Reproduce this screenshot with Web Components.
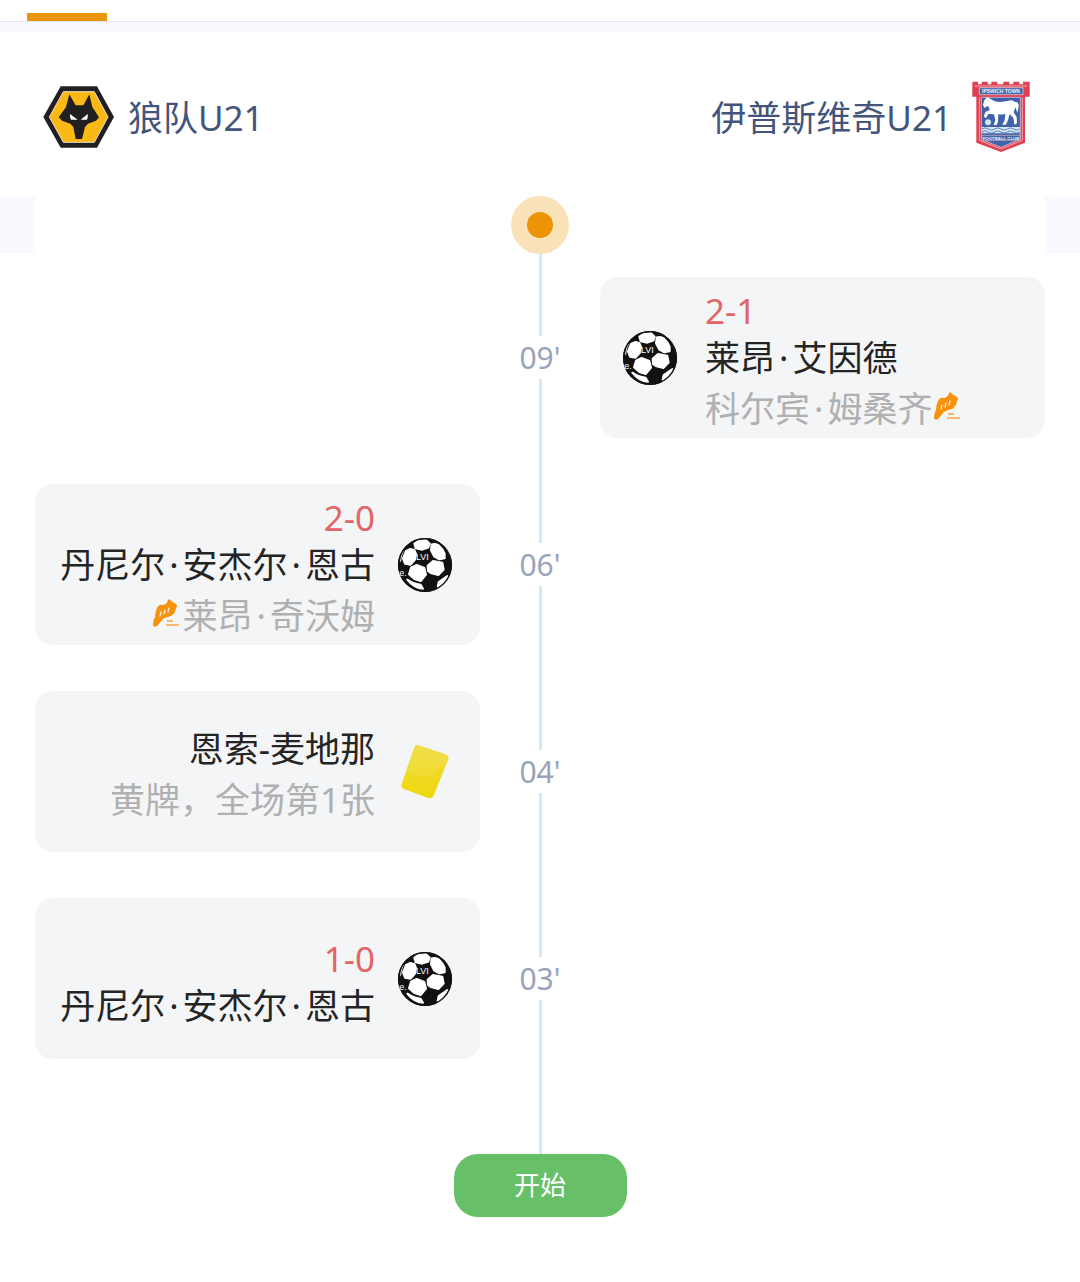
<!DOCTYPE html>
<html lang="zh-CN">
<head>
<meta charset="utf-8">
<meta name="viewport" content="width=device-width, initial-scale=1">
<title>狼队U21 - 伊普斯维奇U21</title>
<style>
body { margin: 0; background: #fff; font-family: "Noto Sans", "Noto Sans CJK SC", sans-serif; }
</style>
</head>
<body>
<match-page></match-page>

<template id="art-wolves">
  <svg viewBox="40 21 216 216" aria-hidden="true">
    <path d="M93 34H202L253 126L202 218H93L41 126Z" fill="#221f20"/>
    <path d="M101 50H194L235 126L194 202H101L59 126Z" fill="#fdb913" stroke="#e8dfcf" stroke-width="3"/>
    <path d="M119 58L138 91H161L179 58L188 96L208 127L199 137L175 146L166 156L157 192H138L131 156L122 146L97 137L87 127L109 96Z" fill="#221f20"/>
    <path d="M121 117L144 134H124Q120 127 121 117ZM174 117L153 134H172Q176 127 174 117Z" fill="#fff"/>
  </svg>
</template>

<template id="art-ipswich">
  <svg viewBox="45 36 216 216" aria-hidden="true">
    <path d="M67 35H84V43H95V35H113V43H124V35H142V43H160V35H178V43H190V35H208V43H219V35H239V80H225V218L153 246L79 218V80H67Z" fill="#df3f50"/>
    <path d="M74 48H232M88 82V211L153 237L217 211V82" fill="none" stroke="#f3a5ac" stroke-width="3"/>
    <path d="M88 53H219V74H88Z" fill="#4668aa" stroke="#f5dce2" stroke-width="2"/>
    <path d="M94 82H211V208L153 232L94 208Z" fill="#3f62aa" stroke="#e9dbe8" stroke-width="2"/>
    <path d="M103 91L111 81L122 87Q136 98 151 96L172 93Q187 88 195 96Q207 94 206 111L202 128L196 112L191 127L200 141L201 160L193 164L190 143L179 132L174 150L168 164H157L164 151L166 131Q154 136 145 132L144 155L140 165H131L136 150L132 133L115 132L108 145L101 139L107 125L119 121L115 108L103 113L99 104Z" fill="#fff"/>
    <circle cx="114" cy="157" r="9" fill="#d5e4f5"/>
    <path d="M95 171H210V190H95Z" fill="#d9e7f5"/>
    <path d="M96 177Q105 170 115 177T134 177T153 177T172 177T191 177T209 177M96 186Q105 179 115 186T134 186T153 186T172 186T191 186T209 186" fill="none" stroke="#5680bd" stroke-width="3"/>
    <path d="M96 196H210V211H96Z" fill="#4164a6" stroke="#dfb8cc" stroke-width="2"/>
    <g fill="#edf2fb" font-family="Liberation Sans, sans-serif" font-weight="700" text-anchor="middle">
      <text x="153" y="69" font-size="15">IPSWICH TOWN</text>
      <text x="153" y="209" font-size="13">FOOTBALL CLUB</text>
    </g>
  </svg>
</template>

<template id="art-goal">
  <svg viewBox="9 9 162 162" role="img" aria-label="进球">
    <circle cx="90" cy="90" r="81" fill="#111"/>
    <g fill="#fff" stroke="#fff" stroke-width="6" stroke-linejoin="round">
      <path d="M58 26L72 17L94 16L104 26L100 38L82 44L62 40Z"/>
      <path d="M33 48L46 42L58 45L63 57L60 74L47 89L30 86L24 70Z"/>
      <path d="M110 28Q120 25 131 31Q143 42 149 56L149 70L133 73L118 65L108 46Z"/>
      <path d="M48 98L65 90L88 99L93 119L77 138L58 132L42 118Z"/>
      <path d="M98 92L114 78L142 83L146 104L130 120L107 114L99 108Z"/>
      <path d="M37 134Q54 146 77 149L84 161Q57 160 37 134Z"/>
      <path d="M131 141L157 123Q155 134 147 142Q139 150 128 155Z"/>
    </g>
    <path d="M15 78Q17 57 28 44Q20 60 18 83ZM151 33Q164 47 165 67Q160 50 150 38Z" fill="#ccc"/>
    <circle cx="90" cy="90" r="79" fill="none" stroke="#111" stroke-width="4"/>
    <g fill="#fff" font-family="Liberation Sans, sans-serif">
      <text x="63" y="76" font-size="27">LVI</text>
      <text x="13" y="122" font-size="27">e.</text>
    </g>
  </svg>
</template>

<template id="art-yellow">
  <svg viewBox="0 0 54 54" role="img" aria-label="黄牌">
    <defs><linearGradient id="sheen" x1="0" y1="0" x2="0" y2="1"><stop offset="0" stop-color="#f0dc3c"/><stop offset="1" stop-color="#f0d80d"/></linearGradient></defs>
    <path d="M20 0L47 9Q52 11 50 15L36 50Q34 54 30 53L6 44Q2 42 4 38L16 3Q17 0 20 0Z" fill="url(#sheen)"/>
    <path d="M20 0L47 9Q52 11 50 15L46 20Q39 24 34 30Q25 34 8 28L16 3Q17 0 20 0Z" fill="#fff" opacity=".08"/>
  </svg>
</template>

<template id="art-assist">
  <svg viewBox="0 0 28 28" role="img" aria-label="助攻">
    <path d="M17 1Q19 -1 20 2L25 5Q27 7 25 9Q24 15 20 17Q15 18 12 20L6 27Q2 29 2 25Q2 21 4 18Q4 13 6 9Q8 5 11 6Q16 6 17 1Z" fill="#f8910c"/>
    <path d="M10 13L9 17M14 11L13 15M18 9L17 13" stroke="#fff3df" stroke-width="1.2" stroke-linecap="round"/>
    <path d="M16 22H22M15 26H28" stroke="#f5a548" stroke-width="1.6"/>
  </svg>
</template>

<template id="tpl-page">
  <style>
    :host { display: block; }
    nav { height: 21px; padding: 0 27px; display: flex; align-items: flex-end; border-bottom: 1px solid #e6e7ee; }
    nav span { width: 80px; height: 8px; background: #e99509; }
    .strip { height: 10px; background: #f8f9fe; }
    header { display: flex; justify-content: space-between; padding: 50px 43px 42px; }
    .band { background: #f9f9ff; padding: 0 35px; }
    .now { background: #fff; display: flex; justify-content: center; }
    .dot { box-sizing: border-box; width: 58px; height: 58px; border-radius: 50%; border: 16px solid #fae2b8; background: #ec9306; }
    ol { list-style: none; margin: 0; padding: 0 35px; }
    footer { display: flex; flex-direction: column; align-items: center; padding-bottom: 65px; }
    .tail { width: 3px; height: 72px; background: #d4e9f5; }
    button { font: inherit; font-size: 26px; line-height: 39px; color: #fff; background: #67bf68; border: 0; border-radius: 24px; padding: 12px 60px; min-width: 173px; }
  </style>
  <nav aria-label="标签"><span></span></nav>
  <div class="strip"></div>
  <header>
    <team-badge art="wolves">狼队U21</team-badge>
    <team-badge art="ipswich" side="away">伊普斯维奇U21</team-badge>
  </header>
  <div class="band"><div class="now"><span class="dot"></span></div></div>
  <ol>
    <li><match-event side="away" minute="09'" art="goal" score="2-1" player="莱昂·艾因德" note="科尔宾·姆桑齐" assist></match-event></li>
    <li><match-event side="home" minute="06'" art="goal" score="2-0" player="丹尼尔·安杰尔·恩古" note="莱昂·奇沃姆" assist></match-event></li>
    <li><match-event side="home" minute="04'" art="yellow" player="恩索-麦地那" note="黄牌，全场第1张"></match-event></li>
    <li><match-event side="home" minute="03'" art="goal" score="1-0" player="丹尼尔·安杰尔·恩古"></match-event></li>
  </ol>
  <footer><span class="tail"></span><button type="button">开始</button></footer>
</template>

<template id="tpl-team">
  <style>
    :host { display: flex; align-items: center; gap: 13px; color: #43557b; font-size: 35px; line-height: 48px; }
    :host([side="away"]) { flex-direction: row-reverse; }
    match-art { width: 72px; height: 72px; }
  </style>
  <match-art></match-art><span><slot></slot></span>
</template>

<template id="tpl-event">
  <style>
    :host { display: grid; grid-template-columns: 1fr 120px 1fr; }
    .card { box-sizing: border-box; margin: 23px 0; min-height: 161px; padding: 0 23px; border-radius: 18px; background: #f4f5f7; display: flex; align-items: center; gap: 28px; grid-row: 1; font-size: 35px; white-space: nowrap; }
    :host([side="away"]) .card { grid-column: 3; }
    :host([side="home"]) .card { grid-column: 1; flex-direction: row-reverse; gap: 23px; padding-right: 28px; text-align: right; }
    .icon { width: 54px; height: 54px; }
    .text { padding-top: 8px; }
    .score { color: #e26666; line-height: 46px; }
    .player { color: #242424; line-height: 48px; }
    .note { color: #b0b0b0; line-height: 54px; display: flex; align-items: center; }
    :host([side="home"]) .note { flex-direction: row-reverse; gap: 4px; }
    .note match-art { width: 28px; height: 28px; margin-bottom: 6px; }
    .sep { padding: 0 4px; }
    .axis { grid-column: 2; grid-row: 1; display: flex; flex-direction: column; align-items: center; }
    .axis::before, .axis::after { content: ""; flex: 1; width: 3px; background: #d4e9f5; }
    time { color: #9aa3b8; font-size: 30px; line-height: 43px; }
  </style>
  <div class="axis"><time></time></div>
  <article class="card"><match-art class="icon"></match-art><div class="text"></div></article>
</template>

<script>
const clone = id => document.getElementById(id).content.cloneNode(true);

class MatchArt extends HTMLElement {
  connectedCallback() {
    if (this.shadowRoot) return;
    const root = this.attachShadow({ mode: "open" });
    root.innerHTML = "<style>:host{display:block;flex:none}svg{display:block;width:100%;height:100%;overflow:visible}</style>";
    root.append(clone("art-" + this.getAttribute("name")));
  }
}

class TeamBadge extends HTMLElement {
  connectedCallback() {
    if (this.shadowRoot) return;
    const part = clone("tpl-team");
    part.querySelector("match-art").setAttribute("name", this.getAttribute("art"));
    this.attachShadow({ mode: "open" }).append(part);
  }
}

class MatchEvent extends HTMLElement {
  connectedCallback() {
    if (this.shadowRoot) return;
    const part = clone("tpl-event");
    part.querySelector("time").textContent = this.getAttribute("minute");
    part.querySelector(".icon").setAttribute("name", this.getAttribute("art"));
    const text = part.querySelector(".text");
    for (const field of ["score", "player", "note"]) {
      const value = this.getAttribute(field);
      if (!value) continue;
      const line = document.createElement("div");
      line.className = field;
      const label = document.createElement("span");
      // Names carry extra room on both sides of the middle dot.
      value.split(/(·)/).forEach(piece => {
        if (piece !== "·") return label.append(piece);
        const dot = document.createElement("span");
        dot.className = "sep";
        dot.textContent = piece;
        label.append(dot);
      });
      line.append(label);
      if (field === "note" && this.hasAttribute("assist")) {
        const boot = document.createElement("match-art");
        boot.setAttribute("name", "assist");
        line.append(boot);
      }
      text.append(line);
    }
    this.attachShadow({ mode: "open" }).append(part);
  }
}

class MatchPage extends HTMLElement {
  connectedCallback() {
    if (!this.shadowRoot) this.attachShadow({ mode: "open" }).append(clone("tpl-page"));
  }
}

customElements.define("match-art", MatchArt);
customElements.define("team-badge", TeamBadge);
customElements.define("match-event", MatchEvent);
customElements.define("match-page", MatchPage);
</script>
</body>
</html>
